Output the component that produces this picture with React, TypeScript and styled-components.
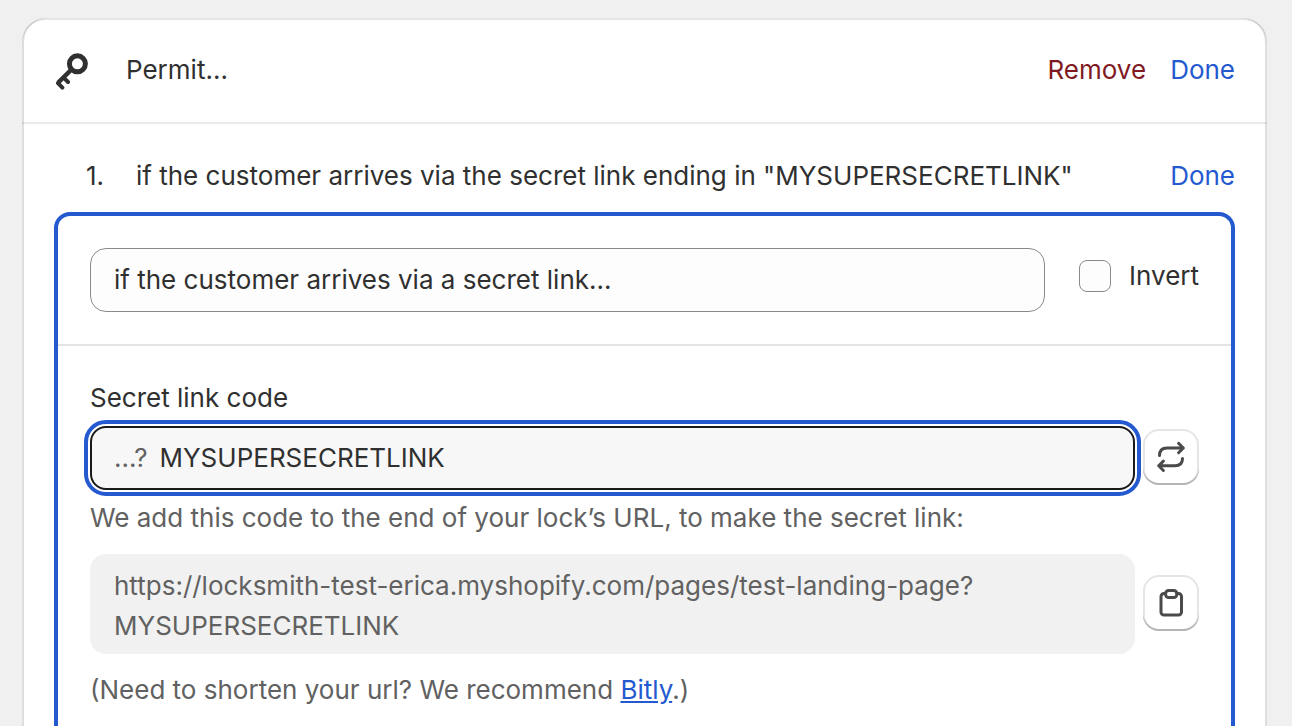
import React, { useState } from 'react';
import styled, { createGlobalStyle } from 'styled-components';

const GlobalStyle = createGlobalStyle`
  *, *::before, *::after { box-sizing: border-box; }
  body {
    margin: 0;
    background: #f0f0f0;
    color: #303030;
    font-family: Inter, "Liberation Sans", sans-serif;
    font-size: 26px;
    line-height: 40px;
  }
  button, input, select {
    margin: 0;
    font: inherit;
    color: inherit;
  }
`;

const Page = styled.main`
  display: flex;
  flex-direction: column;
  min-height: 100vh;
  padding: 18px 25px 0 22px;
`;

const Card = styled.section`
  display: flex;
  flex: 1;
  flex-direction: column;
  border-radius: 24px 24px 0 0;
  background: #fff;
  box-shadow:
    inset 2px 0 0 rgba(0, 0, 0, 0.13),
    inset -2px 0 0 rgba(0, 0, 0, 0.13),
    inset 0 2px 0 rgba(204, 204, 204, 0.5);
`;

const CardHeader = styled.header`
  display: flex;
  align-items: center;
  height: 106px;
  padding: 0 32px 0 30px;
  border-bottom: 2px solid rgba(0, 0, 0, 0.08);
`;

const CardTitle = styled.h2`
  flex: 1;
  margin: 0 0 0 34px;
  font-size: 26px;
  font-weight: 400;
`;

const Actions = styled.div`
  display: flex;
  gap: 24px;
`;

const TextButton = styled.button<{ $tone?: 'critical' }>`
  padding: 0;
  border: 0;
  background: none;
  color: ${({ $tone }) => ($tone === 'critical' ? '#7f1a22' : '#2459cf')};
  cursor: pointer;
`;

const CardBody = styled.div`
  display: flex;
  flex: 1;
  flex-direction: column;
  padding: 32px 32px 0;
`;

const ConditionRow = styled.div`
  display: flex;
  align-items: center;
  padding-left: 32px;
`;

const ConditionNumber = styled.span`
  width: 50px;
`;

const ConditionText = styled.span`
  flex: 1;
`;

const Editor = styled.div`
  flex: 1;
  margin-top: 16px;
  border: 4px solid #2459cf;
  border-bottom: 0;
  border-radius: 16px 16px 0 0;
`;

const EditorTop = styled.div`
  display: flex;
  align-items: flex-start;
  gap: 34px;
  padding: 32px;
  border-bottom: 2px solid #e3e3e3;
`;

const Select = styled.select`
  flex: 1;
  min-width: 0;
  height: 64px;
  padding: 0 23px;
  appearance: none;
  border: 1px solid #8a8a8a;
  border-radius: 16px;
  background: #fdfdfd;
`;

const CheckLabel = styled.label`
  display: flex;
  align-items: center;
  gap: 18px;
  padding-top: 8px;
`;

const Checkbox = styled.input`
  width: 32px;
  height: 32px;
  appearance: none;
  border: 1px solid #8a8a8a;
  border-radius: 8px;
  background: #fdfdfd;

  &:checked {
    background: #303030;
  }
`;

const EditorForm = styled.div`
  padding: 32px 32px 16px;
`;

const FieldLabel = styled.label`
  display: block;
`;

const FieldRow = styled.div`
  display: flex;
  align-items: center;
  gap: 8px;
`;

const CodeField = styled.div`
  display: flex;
  flex: 1;
  align-items: center;
  gap: 12px;
  min-width: 0;
  height: 64px;
  margin: 8px 0;
  padding: 0 22px;
  border: 2px solid #1a1a1a;
  border-radius: 16px;
  outline: 4px solid #2459cf;
  outline-offset: 2px;
  background: #f7f7f7;
`;

const Prefix = styled.span`
  color: #616161;
`;

const CodeInput = styled.input`
  flex: 1;
  min-width: 0;
  padding: 0;
  border: 0;
  outline: 0;
  background: none;
`;

const Help = styled.p`
  margin: 0;
  color: #616161;
`;

const UrlBox = styled.output`
  flex: 1;
  min-width: 0;
  margin: 16px 0;
  padding: 12px 24px 8px;
  border-radius: 16px;
  background: #f1f1f1;
  color: #616161;
`;

const Link = styled.a`
  color: #2459cf;
`;

const IconButton = styled.button`
  display: grid;
  place-items: center;
  width: 56px;
  height: 56px;
  margin-bottom: 2px;
  padding: 0;
  border: 0;
  border-radius: 16px;
  background: #fff;
  box-shadow:
    inset 0 -2px 0 #b5b5b5,
    inset 0 0 0 2px #e5e5e5;
  cursor: pointer;
`;

const Icon = styled.svg`
  display: block;
  width: 40px;
  height: 40px;
  fill: none;
  stroke: #4a4a4a;
  stroke-width: 3;
  stroke-linecap: round;
  stroke-linejoin: round;
`;

const KeyIcon = styled(Icon)`
  stroke: #303030;
  stroke-width: 4;

  circle {
    stroke-width: 5;
  }
`;

export default function App() {
  const [code, setCode] = useState('MYSUPERSECRETLINK');

  return (
    <>
      <GlobalStyle />
      <Page>
        <Card>
          <CardHeader>
            <KeyIcon viewBox="0 0 40 40" aria-hidden="true">
              <circle cx="25.4" cy="13.8" r="8" />
              <path d="M19.4 19.8 6 33.2 10.4 37.6M18.8 19.8 6.6 32M12.4 28.4 16 32" />
            </KeyIcon>
            <CardTitle>Permit...</CardTitle>
            <Actions>
              <TextButton type="button" $tone="critical">Remove</TextButton>
              <TextButton type="button">Done</TextButton>
            </Actions>
          </CardHeader>
          <CardBody>
            <ConditionRow>
              <ConditionNumber>1.</ConditionNumber>
              <ConditionText>
                if the customer arrives via the secret link ending in "{code}"
              </ConditionText>
              <TextButton type="button">Done</TextButton>
            </ConditionRow>
            <Editor>
              <EditorTop>
                <Select aria-label="Condition">
                  <option>if the customer arrives via a secret link...</option>
                </Select>
                <CheckLabel>
                  <Checkbox type="checkbox" />
                  Invert
                </CheckLabel>
              </EditorTop>
              <EditorForm>
                <FieldLabel htmlFor="code">Secret link code</FieldLabel>
                <FieldRow>
                  <CodeField>
                    <Prefix>…?</Prefix>
                    <CodeInput
                      id="code"
                      type="text"
                      value={code}
                      onChange={(e) => setCode(e.target.value)}
                    />
                  </CodeField>
                  <IconButton type="button" aria-label="Generate a new code">
                    <Icon viewBox="0 0 40 40" aria-hidden="true">
                      <path d="M8.5 18.6C8.5 13.9 11.2 11 16 11H32.3M27.6 6.3 32.3 11 27.6 15.7" />
                      <path d="M31.5 21.6C31.5 26.1 28.8 28.8 24 28.8H7.7M12.4 24.1 7.7 28.8 12.4 33.5" />
                    </Icon>
                  </IconButton>
                </FieldRow>
                <Help>We add this code to the end of your lock’s URL, to make the secret link:</Help>
                <FieldRow>
                  <UrlBox htmlFor="code">
                    https://locksmith-test-erica.myshopify.com/pages/test-landing-page?
                    <wbr />
                    {code}
                  </UrlBox>
                  <IconButton type="button" aria-label="Copy link">
                    <Icon viewBox="0 0 40 40" aria-hidden="true">
                      <path d="M14.5 10.5H13A3 3 0 0 0 10 13.5V29A3 3 0 0 0 13 32H27.5A3 3 0 0 0 30.5 29V13.5A3 3 0 0 0 27.5 10.5H26" />
                      <rect x="14.6" y="7.5" width="11.2" height="7" rx="3" />
                    </Icon>
                  </IconButton>
                </FieldRow>
                <Help>
                  (Need to shorten your url? We recommend <Link href="https://bitly.com">Bitly</Link>.)
                </Help>
              </EditorForm>
            </Editor>
          </CardBody>
        </Card>
      </Page>
    </>
  );
}
